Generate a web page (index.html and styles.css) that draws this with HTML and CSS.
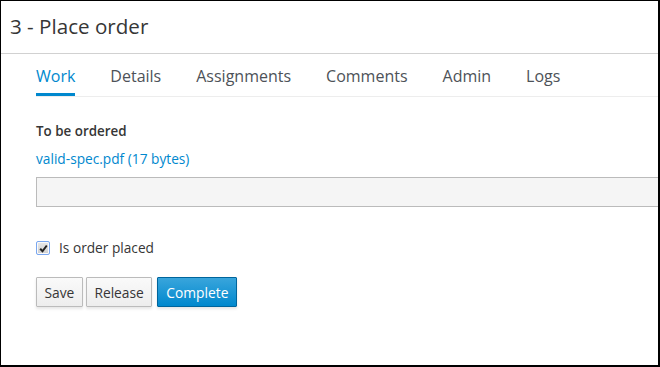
FILE: index.html
```html
<!DOCTYPE html>
<html>
<head>
<meta charset="utf-8">
<link rel="stylesheet" href="styles.css">
</head>
<body>
<div class="frame">
  <header class="header">
    <h1 class="title">3 - Place order</h1>
  </header>
  <nav class="tabs">
    <a class="tab active">Work</a>
    <a class="tab">Details</a>
    <a class="tab">Assignments</a>
    <a class="tab">Comments</a>
    <a class="tab">Admin</a>
    <a class="tab">Logs</a>
  </nav>
  <main class="content">
    <div class="field-label">To be ordered</div>
    <a class="file-link">valid-spec.pdf (17 bytes)</a>
    <div class="textbox"></div>
    <label class="check">
      <span class="box">
        <svg width="9" height="9" viewBox="0 0 9 9"><path d="M1.2 4.8 L3.5 7.3 L7.8 1.5" fill="none" stroke="#222" stroke-width="2"/></svg>
      </span>
      <span class="check-text">Is order placed</span>
    </label>
    <div class="actions">
      <button class="btn">Save</button>
      <button class="btn">Release</button>
      <button class="btn primary">Complete</button>
    </div>
  </main>
</div>
</body>
</html>
```
FILE: styles.css
```css
html, body {
  margin: 0;
  padding: 0;
  background: #fff;
}
.frame {
  width: 660px;
  height: 367px;
  box-sizing: border-box;
  border-left: 1px solid #000;
  border-top: 1px solid #000;
  border-right: 2px solid #000;
  border-bottom: 2px solid #000;
  overflow: hidden;
  font-family: "Open Sans", "Liberation Sans", sans-serif;
  color: #363636;
}
.header {
  box-sizing: border-box;
  height: 53px;
  border-bottom: 1px solid #d1d1d1;
  padding: 11px 0 0 9px;
}
.title {
  margin: 0;
  font-size: 20.6px;
  font-weight: 400;
  line-height: 28px;
  color: #363636;
}
.tabs {
  display: flex;
  gap: 35px;
  margin-left: 35px;
  border-bottom: 1px solid #ededed;
}
.tab {
  padding: 12px 0 7px;
  font-size: 16px;
  line-height: 20px;
  color: #4d5258;
  border-bottom: 3px solid transparent;
}
.tab.active {
  color: #0088ce;
  border-bottom-color: #0088ce;
}
.content {
  padding: 25px 0 0 35px;
}
.field-label {
  font-size: 13.4px;
  font-weight: 600;
  line-height: 18px;
  color: #363636;
}
.file-link {
  display: block;
  margin-top: 10px;
  font-size: 13.7px;
  line-height: 18px;
  color: #0088ce;
}
.textbox {
  margin-top: 9px;
  width: 660px;
  height: 30px;
  box-sizing: border-box;
  background: #f5f5f5;
  border: 1px solid #bbb;
}
.check {
  display: flex;
  align-items: center;
  gap: 9px;
  margin-top: 32px;
  font-size: 13.7px;
  line-height: 18px;
}
.box {
  width: 14px;
  height: 14px;
  box-sizing: border-box;
  border: 1px solid #7aa7f0;
  border-radius: 2px;
  background: linear-gradient(#e8e8e8, #cfcfcf);
  box-shadow: inset 0 0 0 1px #fafafa;
  display: flex;
  align-items: center;
  justify-content: center;
}
.actions {
  display: flex;
  gap: 3px;
  margin-top: 20px;
}
.btn {
  height: 30px;
  padding: 0 7.5px;
  font-family: "Open Sans", "Liberation Sans", sans-serif;
  font-size: 13.8px;
  color: #363636;
  background: linear-gradient(#fafafa, #ededed);
  border: 1px solid #bbb;
  border-radius: 1px;
  box-shadow: 0 2px 3px rgba(3,3,3,0.1);
}
.btn.primary {
  margin-left: 2px;
  padding: 0 8px;
  color: #fff;
  background: linear-gradient(#39a5dc, #0088ce);
  border-color: #00659c;
}
```
